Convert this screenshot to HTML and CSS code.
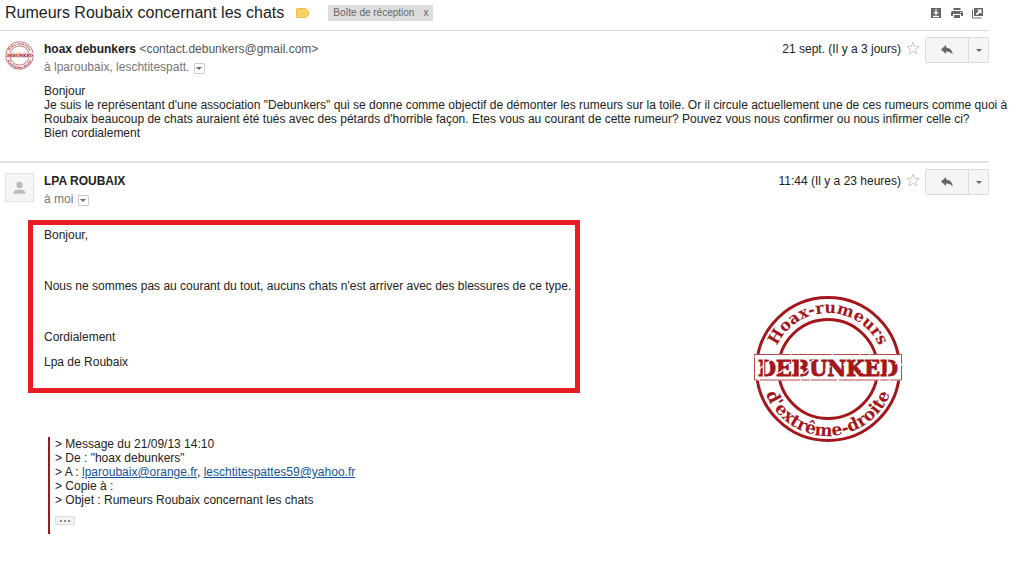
FILE: index.html
```html
<!DOCTYPE html>
<html lang="fr">
<head>
<meta charset="utf-8">
<meta name="viewport" content="width=device-width, initial-scale=1">
<title>Rumeurs Roubaix concernant les chats</title>
<link rel="stylesheet" href="styles.css">
</head>
<body>
<svg class="defs" aria-hidden="true">
  <defs>
    <symbol id="reply" viewBox="0 0 12 10"><path d="M5 0v2.6C9 3 11.2 5.200 11.800 9.600 10.200 7.400 8.200 6.500 5 6.500V9L0 4.500z" fill="#666"/></symbol>
    <symbol id="star" viewBox="0 0 14 14"><path d="M7 1l1.600 4.300 4.600.2-3.600 2.900 1.200 4.500L7 10.300l-3.800 2.600 1.200-4.500L.8 5.500l4.600-.2z" fill="#fff" stroke="#c8c8c8"/></symbol>
    <symbol id="stamp" viewBox="0 0 150 150">
      <g fill="none" stroke="#a3161c" stroke-width="3">
        <circle cx="75" cy="75" r="71.500"/>
        <circle cx="75" cy="75" r="49.500"/>
      </g>
      <path id="arc-top" d="M19 75a56 56 0 0 1 112 0" fill="none"/>
      <path id="arc-bottom" d="M8 75a67 67 0 0 0 134 0" fill="none"/>
      <g class="stamp-ring" text-anchor="middle">
        <text><textPath href="#arc-top" startOffset="50%">Hoax-rumeurs</textPath></text>
        <text class="stamp-low"><textPath href="#arc-bottom" startOffset="50%">d'extrême-droite</textPath></text>
      </g>
      <rect x="1.500" y="60.500" width="147" height="26" fill="#fff"/>
      <path d="M1.500 60.500h147v25.500H1.500z" fill="none" stroke="#b6484c" stroke-dasharray="26 1 9 1 40 2"/>
      <text class="stamp-word" x="75" y="82" text-anchor="middle">DEBUNKED</text>
      <path d="M10.500 64v19M46.500 64v19M134.500 64v19" stroke="#fff" stroke-width="1.500"/>
      <path d="M4 77l6-5M14 69l5-4M31 72l6-4M50 80l5-4M57 68l4-2M72 76l6-4M90 70l5 5M108 79l5-6M118 67l4 4M133 80l6-5M142 70l4-2M26 79l4-3M98 66l4-3" stroke="#fff" stroke-width="1.200"/>
    </symbol>
  </defs>
</svg>

<main class="thread">
  <header class="subject-bar">
    <h1 class="subject">Rumeurs Roubaix concernant les chats</h1>
    <svg class="marker" viewBox="0 0 13 10" aria-hidden="true"><path d="M1 .5h8.500L12.500 3v4L9.500 9.500H1L.5 9V1z" fill="#fad165" stroke="#e8bd50"/></svg>
    <span class="label">Boîte de réception <button class="label-close" type="button" aria-label="Retirer le libellé">x</button></span>
    <div class="tools">
      <button class="tool" type="button" aria-label="Tout développer"><svg viewBox="0 0 12 12"><path d="M1 1h10v10H1z" fill="#666"/><path d="M6 2v4M3 9.500h6" stroke="#fff" stroke-width="1.300"/><path d="M3.300 5h5.400L6 8z" fill="#fff"/></svg></button>
      <button class="tool" type="button" aria-label="Tout imprimer"><svg viewBox="0 0 12 12"><path d="M2.500 1h7v2h-7zM1.500 4h9Q12 4 12 5.500V9h-2V7H2v2H0V5.500Q0 4 1.500 4zM3 8h6v3H3z" fill="#666"/><path d="M9 5.500h1.500" stroke="#fff"/></svg></button>
      <button class="tool" type="button" aria-label="Nouvelle fenêtre"><svg viewBox="0 0 12 12"><path d="M2 1h9v8H2z" fill="#666"/><path d="M.5 2.500v8.500h9" fill="none" stroke="#666"/><path d="M5 2.500h4.500V7L8 5.500 5 8.200 3.800 7l3-2.900z" fill="#fff"/></svg></button>
    </div>
  </header>

  <article class="message">
    <svg class="avatar" role="img" aria-label="Debunked"><use href="#stamp"/></svg>
    <div class="content">
      <div class="head">
        <div class="people">
          <div><strong>hoax debunkers</strong> <span class="address">&lt;contact.debunkers@gmail.com&gt;</span></div>
          <div class="to">à lparoubaix, leschtitespatt. <button class="details" type="button" aria-label="Afficher les détails"></button></div>
        </div>
        <time class="date">21 sept. (Il y a 3 jours)</time>
        <button class="star" type="button" aria-label="Suivre"><svg><use href="#star"/></svg></button>
        <div class="actions"><button class="reply" type="button" aria-label="Répondre"><svg><use href="#reply"/></svg></button><button class="more" type="button" aria-label="Plus"></button></div>
      </div>
      <p class="text">Bonjour<br>Je suis le représentant d'une association "Debunkers" qui se donne comme objectif de démonter les rumeurs sur la toile. Or il circule actuellement une de ces rumeurs comme quoi à<br>Roubaix beaucoup de chats auraient été tués avec des pétards d'horrible façon. Etes vous au courant de cette rumeur? Pouvez vous nous confirmer ou nous infirmer celle ci?<br>Bien cordialement</p>
    </div>
  </article>

  <article class="message">
    <svg class="avatar person" viewBox="0 0 28 28" aria-hidden="true"><path d="M.5.5h27v27H.5z" fill="#f5f5f5" stroke="#e0e0e0"/><circle cx="14" cy="11.500" r="3" fill="#bbb"/><path d="M8.500 20v-1.500Q9 16 14 16t5.500 2.500V20z" fill="#bbb"/></svg>
    <div class="content">
      <div class="head">
        <div class="people">
          <div><strong>LPA ROUBAIX</strong></div>
          <div class="to">à moi <button class="details" type="button" aria-label="Afficher les détails"></button></div>
        </div>
        <time class="date">11:44 (Il y a 23 heures)</time>
        <button class="star" type="button" aria-label="Suivre"><svg><use href="#star"/></svg></button>
        <div class="actions"><button class="reply" type="button" aria-label="Répondre"><svg><use href="#reply"/></svg></button><button class="more" type="button" aria-label="Plus"></button></div>
      </div>
      <div class="answer">
        <div class="answer-text">
          <div class="framed">
            <p>Bonjour,</p>
            <p class="spaced">Nous ne sommes pas au courant du tout, aucuns chats n'est arriver avec des blessures de ce type.</p>
            <p class="spaced">Cordialement</p>
            <p class="signature">Lpa de Roubaix</p>
          </div>
          <blockquote class="quote">
            &gt; Message du 21/09/13 14:10<br>
            &gt; De : "hoax debunkers"<br>
            &gt; A : <a href="mailto:lparoubaix@orange.fr">lparoubaix@orange.fr</a>, <a href="mailto:leschtitespattes59@yahoo.fr">leschtitespattes59@yahoo.fr</a><br>
            &gt; Copie à :<br>
            &gt; Objet : Rumeurs Roubaix concernant les chats
            <button class="expand" type="button" aria-label="Afficher le contenu abrégé"><i></i><i></i><i></i></button>
          </blockquote>
        </div>
        <svg class="stamp" role="img" aria-label="Hoax-rumeurs d'extrême-droite : debunked"><use href="#stamp"/></svg>
      </div>
    </div>
  </article>
</main>
</body>
</html>
```
FILE: styles.css
```css
* {
  box-sizing: border-box;
}

body {
  margin: 0;
  background: #fff;
  color: #222;
  font: 12px/14px "Liberation Sans", Arial, sans-serif;
}

button {
  margin: 0;
  padding: 0;
  border: 0;
  background: none;
  color: inherit;
  font: inherit;
}

p {
  margin: 0;
}

.defs {
  position: absolute;
  width: 0;
  height: 0;
}

.thread {
  margin-right: 35px;
}

.subject-bar {
  display: flex;
  align-items: center;
  height: 31px;
  padding: 0 5px 4px;
  border-bottom: 1px solid #d8d8d8;
}

.subject {
  margin: 0;
  font-size: 16px;
  font-weight: 400;
  line-height: 20px;
}

.marker {
  width: 13px;
  height: 10px;
  margin: 0 19px 0 12px;
}

.label {
  display: flex;
  gap: 9px;
  padding: 1px 5px;
  background: #ddd;
  color: #666;
  font-size: 10px;
}

.tools {
  display: flex;
  gap: 9px;
  margin-left: auto;
}

.tool,
.tool svg {
  display: block;
  width: 12px;
  height: 12px;
}

.message {
  display: flex;
  gap: 10px;
  padding: 6px 0 21px 5px;
  border-bottom: 2px solid #e4e4e4;
}

.message:last-child {
  border-bottom: 0;
}

.avatar {
  flex: none;
  width: 29px;
  height: 29px;
  margin-top: 4px;
}

.content {
  flex: 1;
  min-width: 0;
}

.head {
  display: flex;
  align-items: flex-start;
}

.people {
  flex: 1;
  padding-top: 3px;
  line-height: 18px;
}

.address {
  color: #555;
}

.to {
  color: #777;
}

.details {
  width: 11px;
  height: 11px;
  margin-left: 1px;
  border: 1px solid #ccc;
  border-radius: 1px;
  vertical-align: -2px;
}

.details::after,
.more::after {
  content: "";
  display: block;
  width: 0;
  margin: 0 auto;
  border: 3px solid transparent;
  border-top-color: #666;
  border-bottom: 0;
}

.date {
  padding-top: 3px;
  line-height: 18px;
}

.star,
.star svg {
  display: block;
  width: 14px;
  height: 14px;
}

.star {
  margin: 4px 5px 0;
}

.actions {
  display: flex;
  height: 26px;
  border: 1px solid #dcdcdc;
  border-radius: 2px;
  background: #f5f5f5;
}

.reply {
  width: 43px;
  border-right: 1px solid #dcdcdc;
}

.reply svg {
  display: block;
  width: 12px;
  height: 10px;
  margin: 0 auto;
}

.more {
  width: 19px;
}

.text {
  padding-top: 8px;
  white-space: nowrap;
}

.answer {
  display: flex;
  justify-content: space-between;
  padding-top: 12px;
}

.framed {
  width: 552px;
  margin-left: -16px;
  padding: 3px 3px 19px 11px;
  border: 5px solid #e81c24;
}

.spaced {
  margin-top: 37px;
}

.signature {
  margin-top: 11px;
}

.quote {
  margin: 44px 0 0 4px;
  padding: 0 0 4px 5px;
  border-left: 2px solid #a3161c;
}

.quote a {
  color: #15539e;
}

.expand {
  display: flex;
  justify-content: center;
  align-items: center;
  gap: 2px;
  width: 20px;
  height: 9px;
  margin: 9px 0 5px;
  border: 1px solid #ddd;
  background: #f1f1f1;
}

.expand i {
  width: 2px;
  height: 2px;
  background: #888;
}

.stamp {
  flex: none;
  width: 150px;
  height: 150px;
  margin: 74px 86px 0 0;
}

.stamp-ring {
  fill: #a3161c;
  font: bold 16px "DejaVu Serif", serif;
}

.stamp-low {
  font-size: 17px;
}

.stamp-word {
  fill: #a3161c;
  stroke: #a3161c;
  stroke-width: 1px;
  font: bold 23px "DejaVu Serif Condensed", "Liberation Serif", serif;
}
```
